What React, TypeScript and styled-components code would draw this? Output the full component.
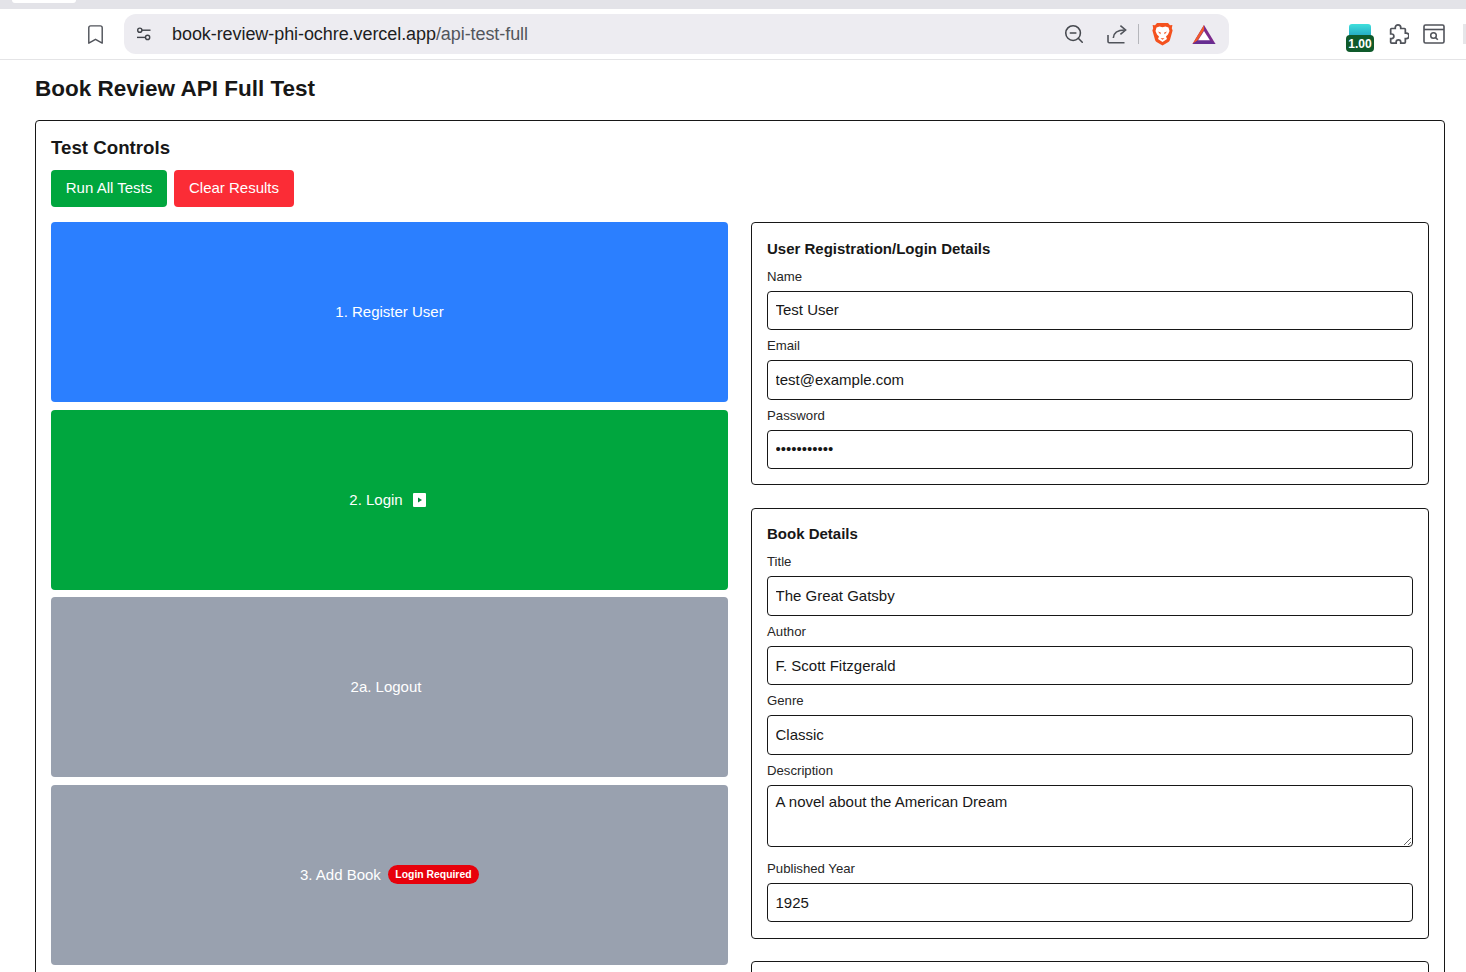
import React from "react";
import styled, { createGlobalStyle } from "styled-components";
import { Bookmark, ZoomOut } from "lucide-react";

const GlobalStyle = createGlobalStyle`
  html, body {
    margin: 0;
    height: 972px;
    overflow: hidden;
    background: #fff;
    font-family: "Liberation Sans", Arial, sans-serif;
    color: #0a0a0a;
  }
  * { box-sizing: border-box; }
`;

const App = () => {
  return (
    <>
      <GlobalStyle />
      <TabStrip>
        <ActiveTab />
      </TabStrip>
      <Toolbar>
        <BookmarkSlot>
          <Bookmark size={23} strokeWidth={1.5} color="#50535a" />
        </BookmarkSlot>
        <AddressBar>
          <svg width="18" height="18" viewBox="0 0 18 18" fill="none" stroke="#3f4248" strokeWidth="1.4">
            <circle cx="4.8" cy="5.2" r="2.1" />
            <path d="M7 5.2h8.5" />
            <circle cx="12.6" cy="12.4" r="2.1" />
            <path d="M2 12.4h8.4" />
          </svg>
          <Url>
            book-review-phi-ochre.vercel.app<UrlPath>/api-test-full</UrlPath>
          </Url>
          <BarIcons>
            <ZoomOut size={22} strokeWidth={1.7} color="#45484e" />
            <ShareSlot>
              <svg width="22" height="22" viewBox="0 0 22 22" fill="none" stroke="#50535a" strokeWidth="1.6">
                <path d="M2 12v6.5c0 .8.5 1.2 1.2 1.2h15.3" />
                <path d="M7.3 15c.3-5 3.7-8 11.5-8" />
                <path d="M14.4 2.6l5.2 4.4-5.2 4.4" />
              </svg>
            </ShareSlot>
            <BarDivider />
            <svg width="21" height="24" viewBox="0 0 21 24">
              <path d="M5 1h11l2 2.2 2.4-.3-.6 3.4.8 2.3-2.6 9.2c-.5 1.4-1.2 2-2.4 2.8L10.5 23.5 5.4 20.6c-1.2-.8-1.9-1.4-2.4-2.8L.4 8.6l.8-2.3L.6 2.9 3 3.2z" fill="#f4511e" />
              <path d="M4.5 5.5l3-1 3 .8 3-.8 3 1 1 3.5-1.5 3.5-2 2 1 2.5-4.5 3-4.5-3 1-2.5-2-2L3.5 9z" fill="#fff" />
              <path d="M6 9.5l3 1.2-.8 1.6zM15 9.5l-3 1.2.8 1.6z" fill="#f4511e" />
              <path d="M8.5 16.2h4l-2 1.6z" fill="#f4511e" />
            </svg>
            <BatSlot>
              <svg width="24" height="21" viewBox="0 0 24 21">
                <path d="M12 1L.5 20h23z" fill="#7b2a8c" />
                <path d="M12 1L.5 20l5-3.5L12 6z" fill="#f1592a" />
                <path d="M12 7l-6 9.5h12z" fill="#fff" />
                <path d="M.5 20l5-3.5h13l5 3.5z" fill="#662d91" />
              </svg>
            </BatSlot>
          </BarIcons>
        </AddressBar>
        <Extensions>
          <ExtensionBadge>
            <ExtensionArt />
            <BadgeCount>1.00</BadgeCount>
          </ExtensionBadge>
          <PuzzleIcon viewBox="0 0 24 24">
            <path d="M9 5a3 3 0 0 1 6 0v1h4a1 1 0 0 1 1 1v4h1a3 3 0 0 1 0 6h-1v4a1 1 0 0 1-1 1h-4v-1a2.5 2.5 0 0 0-5 0v1H5a1 1 0 0 1-1-1v-4h1a2.5 2.5 0 0 0 0-5H4V7a1 1 0 0 1 1-1h4z" />
          </PuzzleIcon>
          <svg width="22" height="20" viewBox="0 0 22 20" fill="none" stroke="#50535a" strokeWidth="1.6">
            <rect x="1" y="1" width="20" height="18" rx="1.5" />
            <path d="M1 5.5h20" />
            <circle cx="10.5" cy="11.5" r="2.8" strokeWidth="1.5" />
            <path d="M12.5 13.5l2.3 2.3" />
          </svg>
        </Extensions>
        <EdgeMark />
      </Toolbar>
      <Page>
        <PageTitle>Book Review API Full Test</PageTitle>
        <Card>
          <CardTitle>Test Controls</CardTitle>
          <ControlRow>
            <ControlButton $bg="#00a63e" $wide={116}>Run All Tests</ControlButton>
            <ControlButton $bg="#fb2c36" $wide={120}>Clear Results</ControlButton>
          </ControlRow>
          <Columns>
            <StepColumn>
              <StepButton $bg="#2b7fff">1. Register User</StepButton>
              <StepButton $bg="#00a63e">
                2. Login
                <PlayMark>
                  <svg width="13" height="14" viewBox="0 0 13 14">
                    <rect width="13" height="14" rx="1" fill="#fff" />
                    <path d="M5 4.5l4 2.5-4 2.5z" fill="#00863a" />
                  </svg>
                </PlayMark>
              </StepButton>
              <StepButton $bg="#99a1af">
                2a. Logout
                <EmptyHint />
              </StepButton>
              <StepButton $bg="#99a1af">
                3. Add Book
                <LoginBadge>Login Required</LoginBadge>
              </StepButton>
            </StepColumn>
            <FormColumn>
              <Panel>
                <PanelTitle>User Registration/Login Details</PanelTitle>
                <Field>
                  <FieldLabel>Name</FieldLabel>
                  <TextInput readOnly value="Test User" />
                </Field>
                <Field>
                  <FieldLabel>Email</FieldLabel>
                  <TextInput readOnly value="test@example.com" />
                </Field>
                <Field>
                  <FieldLabel>Password</FieldLabel>
                  <TextInput readOnly type="password" value="password123" />
                </Field>
              </Panel>
              <Panel>
                <PanelTitle>Book Details</PanelTitle>
                <Field>
                  <FieldLabel>Title</FieldLabel>
                  <TextInput readOnly value="The Great Gatsby" />
                </Field>
                <Field>
                  <FieldLabel>Author</FieldLabel>
                  <TextInput readOnly value="F. Scott Fitzgerald" />
                </Field>
                <Field>
                  <FieldLabel>Genre</FieldLabel>
                  <TextInput readOnly value="Classic" />
                </Field>
                <Field>
                  <FieldLabel>Description</FieldLabel>
                  <TextArea readOnly value="A novel about the American Dream" />
                </Field>
                <Field>
                  <FieldLabel>Published Year</FieldLabel>
                  <TextInput readOnly value="1925" />
                </Field>
              </Panel>
              <Panel />
            </FormColumn>
          </Columns>
        </Card>
      </Page>
    </>
  );
};

const TabStrip = styled.div`
  height: 9px;
  background: #e3e3e8;
  padding-left: 12px;
`;
const ActiveTab = styled.div`
  width: 64px;
  height: 3px;
  background: #fff;
  border-radius: 0 0 6px 6px;
`;
const Toolbar = styled.div`
  height: 51px;
  display: flex;
  align-items: center;
  border-bottom: 1px solid #e4e4e6;
  background: #fff;
`;
const BookmarkSlot = styled.div`
  width: 124px;
  padding-left: 84px;
  display: flex;
`;
const AddressBar = styled.div`
  width: 1105px;
  height: 40px;
  border-radius: 12px;
  background: #edecf1;
  display: flex;
  align-items: center;
  padding: 0 12px 0 11px;
`;
const Url = styled.div`
  margin-left: 19px;
  flex: 1;
  font-size: 18px;
  letter-spacing: -0.07px;
  color: #1d1e22;
`;
const UrlPath = styled.span`
  color: #53565c;
`;
const BarIcons = styled.div`
  display: flex;
  align-items: center;
`;
const ShareSlot = styled.div`
  margin-left: 21px;
  display: flex;
`;
const BarDivider = styled.div`
  width: 1px;
  height: 20px;
  margin: 0 13px 0 10px;
  background: #b5b6bb;
`;
const BatSlot = styled.div`
  margin-left: 19px;
  margin-right: 1px;
  display: flex;
`;
const Extensions = styled.div`
  margin-left: 117px;
  display: flex;
  align-items: center;
  gap: 13px;
`;
const ExtensionBadge = styled.div`
  position: relative;
  width: 28px;
  height: 28px;
  margin-top: 8px;
`;
const ExtensionArt = styled.div`
  width: 22px;
  height: 14px;
  margin: 0 auto;
  border-radius: 3px 3px 0 0;
  background: linear-gradient(#3fe0dc, #1f9fc0);
`;
const BadgeCount = styled.div`
  position: absolute;
  left: 0;
  bottom: 0;
  width: 28px;
  height: 17px;
  border-radius: 4px;
  background: #0f5a2b;
  color: #fff;
  font-size: 12px;
  font-weight: 700;
  line-height: 18px;
  text-align: center;
`;
const PuzzleIcon = styled.svg`
  width: 22px;
  height: 22px;
  margin-right: 1px;
  fill: none;
  stroke: #50535a;
  stroke-width: 1.9;
`;
const EdgeMark = styled.div`
  width: 3px;
  height: 20px;
  margin-left: 18px;
  background: #e6e6e9;
`;
const Page = styled.div`
  padding: 15px 21px 0 35px;
`;
const PageTitle = styled.h1`
  margin: 0 0 17px;
  font-size: 22.5px;
  line-height: 28px;
  font-weight: 700;
  color: #171717;
`;
const Card = styled.div`
  border: 1px solid #171717;
  border-radius: 4px;
  padding: 16px 15px;
`;
const CardTitle = styled.h2`
  margin: 0 0 11px;
  font-size: 18.7px;
  line-height: 22px;
  font-weight: 700;
  color: #171717;
`;
const ControlRow = styled.div`
  display: flex;
  gap: 7px;
  margin-bottom: 15px;
`;
const ControlButton = styled.button<{ $bg: string; $wide: number }>`
  width: ${(p) => p.$wide}px;
  height: 37px;
  border: 0;
  border-radius: 4px;
  padding: 0 0 2px;
  background: ${(p) => p.$bg};
  color: #fff;
  font: 400 15px "Liberation Sans", Arial, sans-serif;
`;
const Columns = styled.div`
  display: grid;
  grid-template-columns: 677px 678px;
  gap: 23px;
`;
const StepColumn = styled.div`
  display: flex;
  flex-direction: column;
  gap: 7.67px;
`;
const StepButton = styled.button<{ $bg: string }>`
  height: 180px;
  flex: none;
  border: 0;
  border-radius: 4px;
  padding: 0 0 1px;
  display: flex;
  align-items: center;
  justify-content: center;
  background: ${(p) => p.$bg};
  color: #fff;
  font: 400 15px "Liberation Sans", Arial, sans-serif;
`;
const PlayMark = styled.span`
  display: flex;
  margin: 1px 4px 0 10px;
`;
const EmptyHint = styled.span`
  width: 7px;
`;
const LoginBadge = styled.span`
  margin: 1px 0 0 7px;
  height: 19px;
  padding: 0 7.5px;
  border-radius: 10px;
  background: #e7000b;
  font-size: 10.4px;
  font-weight: 700;
  line-height: 19px;
`;
const FormColumn = styled.div`
  display: flex;
  flex-direction: column;
  gap: 22.4px;
`;
const Panel = styled.div`
  border: 1px solid #171717;
  border-radius: 4px;
  padding: 15.5px 15px 15.4px;
  min-height: 40px;
`;
const PanelTitle = styled.h3`
  margin: 0 0 10px;
  font-size: 15px;
  line-height: 20px;
  font-weight: 700;
  color: #171717;
`;
const Field = styled.div`
  margin-bottom: 8px;
  &:last-child {
    margin-bottom: 0;
  }
`;
const FieldLabel = styled.label`
  display: block;
  height: 16px;
  margin-bottom: 6px;
  font-size: 13.2px;
  line-height: 16px;
  color: #262626;
`;
const TextInput = styled.input`
  display: block;
  width: 100%;
  height: 39.5px;
  border: 1px solid #171717;
  border-radius: 4px;
  padding: 0 7.5px 1px;
  outline: none;
  background: #fff;
  color: #171717;
  font: 400 15px "Liberation Sans", Arial, sans-serif;
`;
const TextArea = styled.textarea`
  display: block;
  width: 100%;
  height: 62px;
  margin-bottom: 14px;
  border: 1px solid #171717;
  border-radius: 4px;
  padding: 7px 7.5px;
  outline: none;
  background: #fff;
  color: #171717;
  font: 400 15px "Liberation Sans", Arial, sans-serif;
`;

export default App;
